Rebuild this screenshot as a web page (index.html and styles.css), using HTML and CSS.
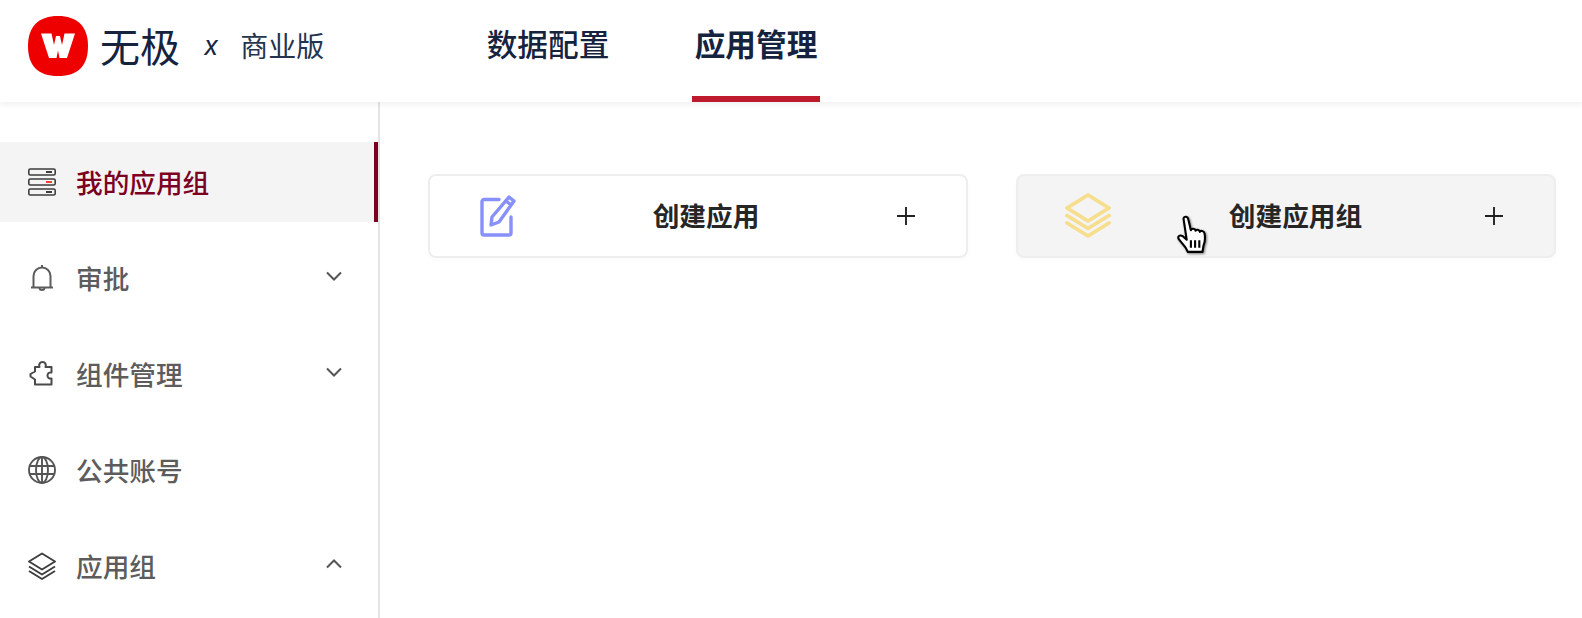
FILE: index.html
```html
<!DOCTYPE html>
<html lang="zh-CN">
<head>
<meta charset="utf-8">
<title>无极</title>
<link rel="stylesheet" href="styles.css">
</head>
<body>
<header class="topbar">
  <div class="brand">
    <svg class="brand-logo" viewBox="0 0 60 60"><path fill="#ee0000" d="M30 0C49 0 60 10 60 30C60 50 50 60 30 60C10 60 0 50 0 30C0 10 11 0 30 0Z"/><path fill="#fff" d="M13 17.500H23.500L26 29L28 20H32L34 29L36.500 17.500H47L39 42H31.500L30 34.500L28.500 42H21Z"/></svg>
    <span class="brand-name">无极</span>
    <span class="brand-x">x</span>
    <span class="brand-edition">商业版</span>
  </div>
  <nav class="tabs">
    <a class="tab">数据配置</a>
    <a class="tab tab-active">应用管理</a>
  </nav>
</header>
<div class="body">
  <aside class="sidebar">
    <div class="item item-active">
      <svg class="icon" viewBox="0 0 28 28" fill="none" stroke="#3d3d3d" stroke-width="1.600"><rect x="0.800" y="1" width="26.400" height="6" rx="1.600"/><rect x="0.800" y="11" width="26.400" height="6" rx="1.600"/><rect x="0.800" y="21" width="26.400" height="6" rx="1.600"/><path d="M18 4h6M18 24h6" stroke-width="2"/><path d="M18 14h6" stroke="#f0442e" stroke-width="2"/></svg>
      <span class="label">我的应用组</span>
    </div>
    <div class="item">
      <svg class="icon" viewBox="0 0 28 28" fill="none" stroke="#5c5c5c" stroke-width="2"><path d="M3 23.500h22M5.500 23.500V12a8.500 8.500 0 0 1 17 0v11.500"/><path d="M14 3.500V1M11.500 23.500a2.500 2.500 0 0 0 5 0"/></svg>
      <span class="label">审批</span>
      <svg class="chev" viewBox="0 0 16 10" fill="none" stroke="#555" stroke-width="2"><path d="M1 1.500L8 8.500L15 1.500"/></svg>
    </div>
    <div class="item">
      <svg class="icon" viewBox="0 0 28 28" fill="none" stroke="#4a4a4a" stroke-width="2" stroke-linejoin="round"><path d="M7 7h4.500C10.500 4 12 2 14.500 2S18.500 4 17.500 7H23.500V12.500C21 12 19.500 13.500 19.500 15.500S21 19 23.500 18.500V24.500H7V19.500L2.500 16.500V14L7 11.500Z"/></svg>
      <span class="label">组件管理</span>
      <svg class="chev" viewBox="0 0 16 10" fill="none" stroke="#555" stroke-width="2"><path d="M1 1.500L8 8.500L15 1.500"/></svg>
    </div>
    <div class="item">
      <svg class="icon" viewBox="0 0 28 28" fill="none" stroke="#555" stroke-width="1.900"><circle cx="14" cy="14" r="13"/><ellipse cx="14" cy="14" rx="6" ry="13"/><path d="M14 1v26M1.500 10h25M1.500 18h25"/></svg>
      <span class="label">公共账号</span>
    </div>
    <div class="item">
      <svg class="icon" viewBox="0 0 28 28" fill="none" stroke="#3d3d3d" stroke-width="1.900" stroke-linejoin="round"><path d="M14 1.500L27 9.500L14 17.500L1 9.500Z"/><path d="M1 14.500L14 22.500L27 14.500M1 19L14 27L27 19"/></svg>
      <span class="label">应用组</span>
      <svg class="chev" viewBox="0 0 16 10" fill="none" stroke="#555" stroke-width="2"><path d="M1 8.500L8 1.500L15 8.500"/></svg>
    </div>
  </aside>
  <main class="main">
    <div class="card">
      <svg class="card-icon" viewBox="0 0 36 42" fill="none" stroke="#8790fb" stroke-width="3.400" stroke-linejoin="round" stroke-linecap="round"><path d="M19 4.500H4a2 2 0 0 0-2 2V38a2 2 0 0 0 2 2H29a2 2 0 0 0 2-2V22"/><path d="M29 2L34 6L19 27L11 30L12 22Z"/><path d="M26 6L31 10"/></svg>
      <span class="card-title">创建应用</span>
      <svg class="plus" viewBox="0 0 20 20" stroke="#222" stroke-width="1.900"><path d="M10 1v18M1 10h18"/></svg>
    </div>
    <div class="card card-hover">
      <svg class="card-icon card-icon-wide" viewBox="0 0 46 46" fill="none" stroke="#f6de8d" stroke-width="3.800" stroke-linejoin="round" stroke-linecap="round"><path d="M23 2L44 15L23 28L2 15Z"/><path d="M2 22.500L23 35.500L44 22.500M2 30L23 43L44 30"/></svg>
      <span class="card-title card-title-shifted">创建应用组</span>
      <svg class="plus" viewBox="0 0 20 20" stroke="#222" stroke-width="1.900"><path d="M10 1v18M1 10h18"/></svg>
      <svg class="cursor" viewBox="0 0 32 38"><path fill="#fff" stroke="#000" stroke-width="2" stroke-linejoin="round" d="M7 3.500C7 1 11 1 11.500 4L14 14.500C14.500 12.500 18 12.500 18.500 15C19 13.500 22 13.500 22.500 16C23 14.500 26.500 15 27 17.500C27.500 21 27.500 26 26 29L25 35H11L9 31L2.500 23C1 20.500 3.500 18.500 6 20L10 23.500Z"/><path stroke="#000" stroke-width="2" d="M14 24v7M18 24v7M22 24v7"/></svg>
    </div>
  </main>
</div>
</body>
</html>
```
FILE: styles.css
```css
* { box-sizing: border-box; }
html, body { margin: 0; height: 100%; overflow: hidden; }
body {
  background: #fff;
  font-family: "Noto Sans CJK SC", "Noto Sans", sans-serif;
  display: flex;
  flex-direction: column;
  height: 618px;
}
.topbar {
  height: 102px;
  flex: none;
  display: flex;
  align-items: stretch;
  background: #fff;
  box-shadow: 0 2px 6px rgba(20, 40, 60, 0.08);
  position: relative;
  z-index: 1;
}
.brand {
  display: flex;
  align-items: center;
  width: 484px;
  padding-left: 28px;
  padding-bottom: 12px;
  color: #15233f;
}
.brand-logo { width: 60px; height: 60px; flex: none; margin-top: 2px; }
.brand-name { font-size: 40px; margin-left: 12px; line-height: 1; }
.brand-x {
  font-family: "Inter", sans-serif;
  font-style: italic;
  font-size: 26px;
  margin-left: 24px;
  margin-top: 2px;
  line-height: 1;
}
.brand-edition { font-size: 28px; margin-left: 22px; line-height: 1; color: #24344f; }
.tabs { display: flex; gap: 80px; }
.tab {
  width: 128px;
  text-align: center;
  font-size: 30.67px;
  font-weight: 500;
  line-height: 86px;
  color: #15233f;
  border-bottom: 6px solid transparent;
}
.tab-active { font-weight: 700; border-bottom-color: #bd1a2b; }
.body { flex: 1; display: flex; min-height: 0; }
.sidebar {
  width: 380px;
  flex: none;
  border-right: 2px solid #e4e4e4;
  padding-top: 40px;
  display: flex;
  flex-direction: column;
  gap: 16px;
}
.item {
  height: 80px;
  flex: none;
  display: flex;
  align-items: center;
  padding: 0 36px 0 28px;
  color: #5c5c5c;
  font-size: 26.67px;
  font-weight: 500;
}
.item-active {
  background: #f4f4f4;
  border-right: 4px solid #7c0022;
  color: #7c0022;
  padding-right: 30px;
}
.icon { width: 28px; height: 28px; flex: none; }
.label { margin-left: 20px; flex: 1; line-height: 1; }
.chev { width: 16px; height: 10px; flex: none; margin-bottom: 4px; }
.main {
  flex: 1;
  padding: 72px 26px 0 48px;
  display: grid;
  grid-template-columns: 540px 540px;
  column-gap: 48px;
  align-content: start;
}
.card {
  height: 84px;
  position: relative;
  display: flex;
  align-items: center;
  border: 2px solid #eeeeee;
  border-radius: 8px;
  background: #fff;
  box-shadow: 0 2px 6px rgba(0, 0, 0, 0.02);
  padding: 0 50px 0 50px;
}
.card-hover { background: #f4f4f4; padding-left: 47px; }
.card-icon { width: 36px; height: 42px; flex: none; }
.card-icon-wide { width: 46px; height: 46px; }
.card-title {
  flex: 1;
  text-align: center;
  font-size: 26.67px;
  font-weight: 700;
  color: #262626;
  line-height: 1;
  padding-bottom: 2px;
}
.card-title-shifted { padding-right: 4px; }
.plus { width: 20px; height: 20px; flex: none; }
.cursor {
  position: absolute;
  left: 158px;
  top: 39px;
  width: 34px;
  height: 40px;
  filter: drop-shadow(1px 1px 1px rgba(0, 0, 0, 0.5));
}
```
